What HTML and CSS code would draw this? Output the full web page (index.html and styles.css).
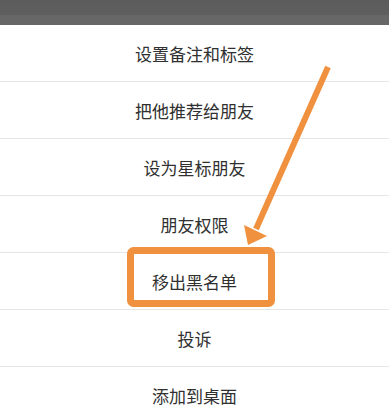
FILE: index.html
```html
<!DOCTYPE html>
<html lang="zh-CN">

<head>
    <meta charset="UTF-8">
    <meta name="viewport" content="width=device-width, initial-scale=1.0">
    <title>资料设置</title>
    <link rel="stylesheet" href="styles.css">
</head>

<body>
    <div class="topo"></div>

    <ul class="menu-lista">
        <li>设置备注和标签</li>
        <li>把他推荐给朋友</li>
        <li>设为星标朋友</li>
        <li>朋友权限</li>
        <li>移出黑名单</li>
        <li>投诉</li>
        <li>添加到桌面</li>
    </ul>

    <!-- marcação laranja por cima da lista -->
    <svg class="marcacao" width="389" height="417" viewBox="0 0 389 417">
        <line x1="328" y1="67" x2="256" y2="229" stroke="#f0913f" stroke-width="6" />
        <polygon points="248,245 244,225 267,236" fill="#f0913f" />
        <rect x="130.5" y="250.5" width="141" height="53" rx="3" fill="none" stroke="#f0913f" stroke-width="7" />
    </svg>
</body>

</html>
```

FILE: styles.css
```css
* {
    padding: 0;
    margin: 0;
    box-sizing: border-box;
}

body {
    width: 389px;
    height: 417px;
    overflow: hidden;
    background-color: #fff;
    font-family: "Noto Sans CJK SC", "Noto Sans", sans-serif;
    position: relative;
}

/* Barra cinza de cima */
.topo {
    height: 25px;
    background: linear-gradient(#5c5c5c 0%, #5f5f5f 60%, #676767 61%, #676767 100%);
}

/* Lista de opções */
.menu-lista {
    list-style: none;
}

.menu-lista li {
    height: 57px;
    padding-top: 2px;
    line-height: 54px;
    text-align: center;
    font-size: 17px;
    color: #303030;
    border-bottom: 1px solid #e6e6e6;
}

/* Seta e caixa */
.marcacao {
    position: absolute;
    top: 0;
    left: 0;
    pointer-events: none;
}
```
